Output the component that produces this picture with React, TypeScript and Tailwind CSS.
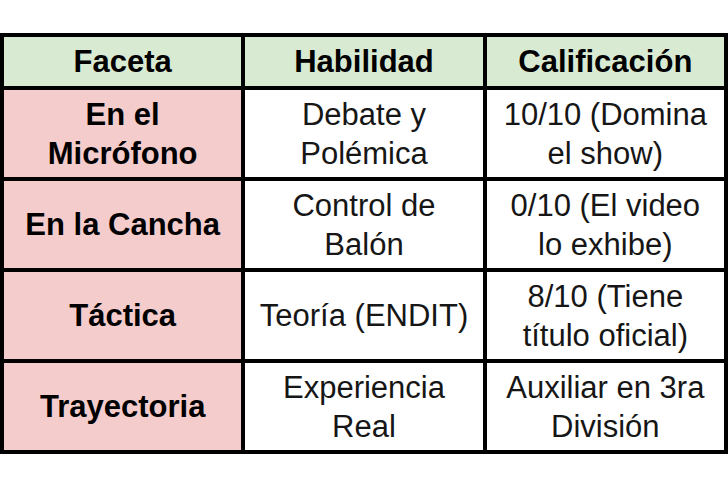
const rows = [
  { faceta: "En el Micrófono", habilidad: "Debate y Polémica", nota: "10/10 (Domina el show)" },
  { faceta: "En la Cancha", habilidad: "Control de Balón", nota: "0/10 (El video lo exhibe)" },
  { faceta: "Táctica", habilidad: "Teoría (ENDIT)", nota: "8/10 (Tiene título oficial)" },
  { faceta: "Trayectoria", habilidad: "Experiencia Real", nota: "Auxiliar en 3ra División" },
];

export default function App() {
  return (
    <div
      className="w-[728px] h-[488px] bg-white pt-[33px]"
      style={{ fontFamily: '"Liberation Sans", Arial, sans-serif' }}
    >
      <table className="w-[728px] table-fixed border-collapse border-[4px] border-black text-[31px] leading-[39px] text-[#161616]">
        <thead>
          <tr className="h-[53px] bg-[#d9ead3]">
            {["Faceta", "Habilidad", "Calificación"].map((h) => (
              <th key={h} className="border-[4px] border-black px-[9px] text-center font-bold text-black">
                {h}
              </th>
            ))}
          </tr>
        </thead>
        <tbody>
          {rows.map((r) => (
            <tr key={r.faceta} className="h-[91px]">
              <td className="border-[4px] border-black bg-[#f4cccc] px-[9px] text-center font-bold text-black">
                {r.faceta}
              </td>
              <td className="border-[4px] border-black px-[9px] text-center">{r.habilidad}</td>
              <td className="border-[4px] border-black px-[9px] text-center">{r.nota}</td>
            </tr>
          ))}
        </tbody>
      </table>
    </div>
  );
}
